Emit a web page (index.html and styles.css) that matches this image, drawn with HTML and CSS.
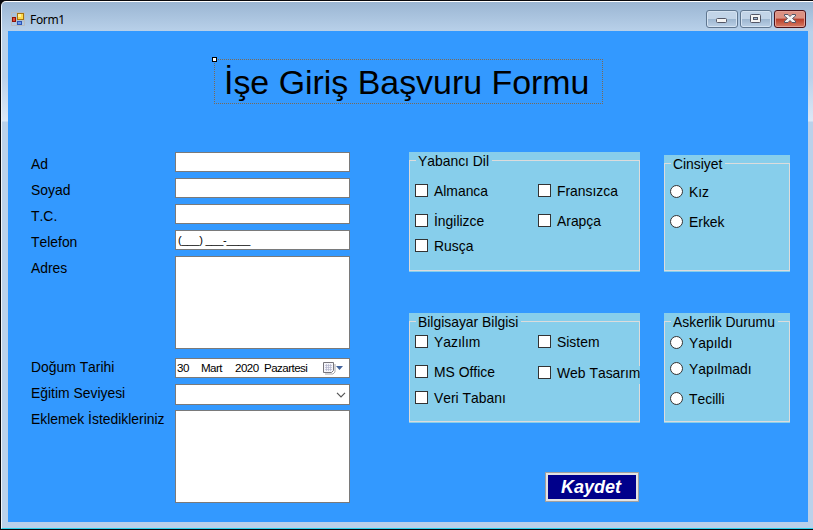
FILE: index.html
```html
<!DOCTYPE html>
<html lang="tr">
<head>
<meta charset="utf-8">
<title>Form1</title>
<link rel="stylesheet" href="styles.css">
</head>
<body>
<div class="window">
  <header class="titlebar">
    <svg class="app-icon" width="14" height="14" viewBox="0 0 14 14">
      <path d="M.5.5h13v13H.5zM6 .5v13M.5 9h13" fill="none" stroke="#b9bcc0"/>
      <rect x="6.5" y="1.5" width="6" height="6" fill="#ffdb4d" stroke="#a8740c"/>
      <rect x="7" y="2" width="3" height="3" fill="#fff09a"/>
      <rect x="1.5" y="5.5" width="3" height="4" fill="#e34a35" stroke="#8e1408"/>
      <rect x="6.5" y="9.5" width="4" height="3" fill="#6c9af0" stroke="#2c55b4"/>
    </svg>
    <span class="caption">Form1</span>
    <div class="controls">
      <span class="control"><svg width="30" height="16" viewBox="0 0 30 16"><rect x="9.5" y="7.500" width="10" height="4" rx="1" fill="#f4f4f4" stroke="#535666"/></svg></span>
      <span class="control"><svg width="30" height="16" viewBox="0 0 30 16"><rect x="9.500" y="3.500" width="10" height="8" rx="1" fill="#f4f4f4" stroke="#535666"/><rect x="12.500" y="6.500" width="4" height="2" fill="#9db6d2" stroke="#535666"/></svg></span>
      <span class="control control-close"><svg width="30" height="16" viewBox="0 0 30 16"><path d="M9.500 3.500h3.500l2 2 2-2h3.500v1.500l-3 2.500 3 2.500v1.500h-3.500l-2-2-2 2H9.500V10l3-2.500-3-2.500z" fill="#f4f4f4" stroke="#535666"/></svg></span>
    </div>
  </header>
  <main class="client">
    <h1 class="title"><svg class="outline" width="389" height="45"><path d="M0 .5H389M0 44.500H389M.5 0V45M388.500 0V45" fill="none" stroke="#7a6a58" stroke-dasharray="1 1" shape-rendering="crispEdges"/></svg><span class="handle"></span>İşe Giriş Başvuru Formu</h1>
    <div class="body">
      <div class="fields">
        <span class="label">Ad</span><div class="box"></div>
        <span class="label">Soyad</span><div class="box"></div>
        <span class="label">T.C.</span><div class="box"></div>
        <span class="label">Telefon</span><div class="box phone">(___) ___-____</div>
        <span class="label">Adres</span><div class="box area"></div>
        <span class="label label-low">Doğum Tarihi</span>
        <div class="box date">
          <span class="day">30</span><span class="month">Mart</span><span class="year">2020</span><span class="weekday">Pazartesi</span>
          <svg class="calendar" width="21" height="14" viewBox="0 0 21 14">
            <path d="M2 13h8l2-2V3" fill="none" stroke="#a9a9ad"/>
            <path d="M.5 1.500h10v8l-2 2h-8z" fill="#f5f5fa" stroke="#77757c"/>
            <path d="M2 4.500h7M2 6.500h7M2 8.500h7M3.500 3v7M5.500 3v7M7.500 3v7" stroke="#b3b5cb" stroke-width=".7"/>
            <path d="M13 5h7l-3.500 4z" fill="#41629c"/>
          </svg>
        </div>
        <span class="label label-low">Eğitim Seviyesi</span>
        <div class="box combo"><svg width="10" height="6" viewBox="0 0 10 6"><path d="M1 .8l4 4 4-4" fill="none" stroke="#555" stroke-width="1.200"/></svg></div>
        <span class="label label-low">Eklemek İstedikleriniz</span><div class="box area"></div>
      </div>
      <div class="skills">
        <section class="group languages">
          <h2 class="legend">Yabancı Dil</h2>
          <div class="options">
            <div class="column">
              <label class="option"><i class="check"></i>Almanca</label>
              <label class="option"><i class="check"></i>İngilizce</label>
              <label class="option"><i class="check"></i>Rusça</label>
            </div>
            <div class="column">
              <label class="option"><i class="check"></i>Fransızca</label>
              <label class="option"><i class="check"></i>Arapça</label>
            </div>
          </div>
        </section>
        <section class="group computing">
          <h2 class="legend">Bilgisayar Bilgisi</h2>
          <div class="options">
            <div class="column">
              <label class="option"><i class="check"></i>Yazılım</label>
              <label class="option"><i class="check"></i>MS Office</label>
              <label class="option"><i class="check"></i>Veri Tabanı</label>
            </div>
            <div class="column">
              <label class="option"><i class="check"></i>Sistem</label>
              <label class="option clipped"><i class="check"></i>Web Tasarım</label>
            </div>
          </div>
        </section>
        <button class="save">Kaydet</button>
      </div>
      <div class="personal">
        <section class="group gender">
          <h2 class="legend">Cinsiyet</h2>
          <div class="column">
            <label class="option"><i class="radio"></i>Kız</label>
            <label class="option"><i class="radio"></i>Erkek</label>
          </div>
        </section>
        <section class="group military">
          <h2 class="legend">Askerlik Durumu</h2>
          <div class="column">
            <label class="option"><i class="radio"></i>Yapıldı</label>
            <label class="option"><i class="radio"></i>Yapılmadı</label>
            <label class="option"><i class="radio"></i>Tecilli</label>
          </div>
        </section>
      </div>
    </div>
  </main>
</div>
</body>
</html>
```
FILE: styles.css
```css
* { box-sizing: border-box; }

body {
  margin: 0;
  width: 813px;
  height: 530px;
  padding: 1px 0 1px 1px;
  overflow: hidden;
  background: #08080c;
  font: 13.9px/18px "Liberation Sans", Arial, sans-serif;
  font-kerning: none;
  color: #000;
}

.window {
  height: 528px;
  padding: 0 5px 0 6px;
  border-top: 1px solid #fff;
  border-left: 1px solid #f0f6fc;
  border-bottom: 1px solid #2bd0ea;
  border-top-left-radius: 5px;
  background: linear-gradient(#9bb6d3 0, #b9d1ea 30px, #bad1ea 75px, #dce8f6 119px, #bad1ea 120px);
}

.titlebar {
  display: flex;
  height: 29px;
  padding: 0 2px 0 3px;
  align-items: flex-start;
}
.app-icon { margin-top: 10px; }
.caption {
  margin: 9px auto 0 5px;
  font: 12px/18px "Noto Sans", sans-serif;
  letter-spacing: -.35px;
}
.controls { display: flex; gap: 2px; margin-top: 8px; }
.control {
  width: 32px;
  height: 18px;
  border: 1px solid #5f7690;
  border-radius: 3px;
  box-shadow: inset 0 0 0 1px #d5e3f2;
  background: linear-gradient(#c2d4e8 50%, #9cb5cf 50%, #bbd0e6);
}
.control svg { display: block; }
.control-close {
  border-color: #4c1118;
  box-shadow: inset 0 0 0 1px #e3a095;
  background: linear-gradient(#dc9182 45%, #b83c28 50%, #d77c65);
}

.client {
  height: 491px;
  padding-top: 28px;
  background: #3399ff;
}
.title {
  position: relative;
  width: 389px;
  height: 45px;
  margin: 0 0 0 206px;
  padding-left: 10px;
  font-size: 33.9px;
  font-weight: 400;
  line-height: 47px;
  white-space: nowrap;
}
.outline { position: absolute; top: 0; left: 0; }
.handle {
  position: absolute;
  top: -2px;
  left: -2px;
  width: 5px;
  height: 5px;
  border: 1px solid #000;
  background: #fff;
}

.body { display: flex; margin-top: 48px; padding-left: 23px; }

.fields {
  display: grid;
  grid-template-columns: 144px 175px;
  grid-template-rows: 26px 26px 26px 26px 102px 26px 26px 93px;
  align-items: start;
  margin-right: 59px;
}
.label { padding-top: 3px; white-space: nowrap; }
.label-low { padding-top: 0; }
.box {
  height: 20px;
  border: 1px solid #7a7a7a;
  background: #fff;
}
.phone { padding-left: 2px; font-size: 11px; line-height: 18px; letter-spacing: -.22px; }
.area { height: 93px; }
.date { display: flex; padding-left: 1px; font-size: 11.6px; line-height: 18px; letter-spacing: -.55px; }
.day { width: 24px; }
.month { width: 34px; }
.year { width: 29px; }
.weekday { width: 59px; }
.calendar { margin-top: 2px; }
.combo { display: flex; height: 21px; padding-right: 3px; align-items: center; justify-content: flex-end; }

.skills { width: 231px; margin-right: 24px; }
.personal { width: 126px; padding-top: 3px; }

.group { position: relative; background: #87ceeb; }
.group::before {
  content: "";
  position: absolute;
  inset: 8px 0 1px;
  border: 1px solid #dcdcdc;
}
.legend {
  position: relative;
  width: max-content;
  height: 18px;
  margin: 0 0 0 7px;
  padding: 0 3px 0 2px;
  background: #87ceeb;
  font-size: 13.9px;
  font-weight: 400;
  line-height: 18px;
}
.languages { height: 120px; }
.computing { height: 110px; margin-top: 41px; }
.gender { height: 117px; }
.military { height: 110px; margin-top: 41px; }

.options { display: flex; }
.options .column { width: 123px; }
.options .column + .column { width: 108px; padding-left: 6px; }
.column { position: relative; padding-left: 6px; }
.option {
  display: flex;
  height: 18px;
  align-items: flex-start;
  line-height: 14px;
  white-space: nowrap;
}
.check, .radio {
  flex: none;
  width: 13px;
  height: 13px;
  margin-right: 6px;
  border: 1px solid #333;
  background: #fff;
}
.radio { border-radius: 50%; }

.languages .column { padding-top: 14px; }
.languages .option + .option { margin-top: 12px; }
.languages .option:nth-child(3) { margin-top: 7px; }
.computing .column { padding-top: 4px; }
.computing .option + .option { margin-top: 12px; }
.computing .option:nth-child(3) { margin-top: 8px; }
.computing .option.clipped { margin-top: 13px; overflow: hidden; background: #87ceeb; }
.gender .column { padding-top: 12px; }
.gender .option + .option { margin-top: 12px; }
.military .column { padding-top: 5px; }
.military .option + .option { margin-top: 8px; }
.military .option:nth-child(3) { margin-top: 12px; }

.save {
  display: block;
  width: 94px;
  height: 30px;
  margin: 49px 0 0 136px;
  padding: 0 2px 0 0;
  border: 1px solid #a0a0a0;
  box-shadow: inset 0 0 0 2px #e3e3e3;
  background: #00008b;
  color: #fff;
  font: italic bold 18px/26px "Liberation Sans", Arial, sans-serif;
}
```
